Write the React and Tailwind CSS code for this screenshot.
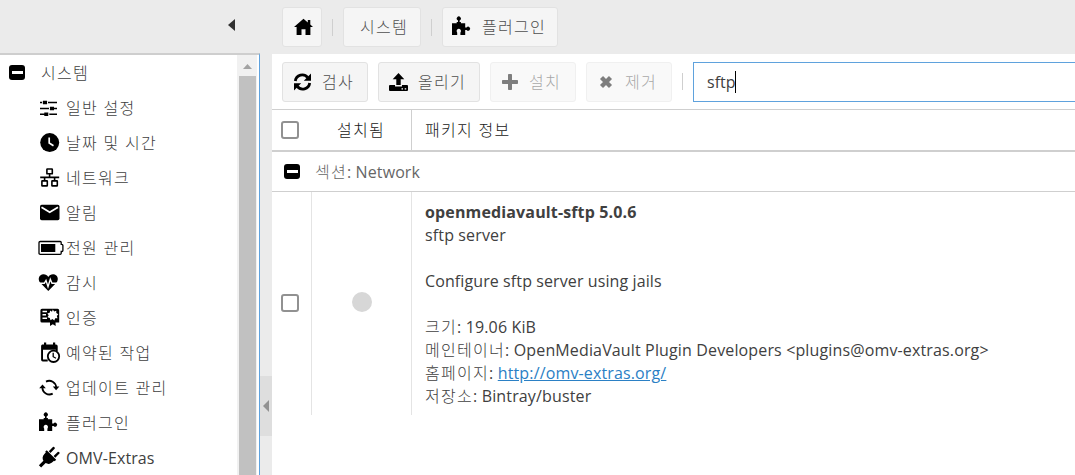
import React from "react";

const KR = "font-['Open_Sans','Noto_Sans_CJK_KR',sans-serif]";

function Icon({ children, className = "" }) {
  return (
    <svg viewBox="0 0 26 20" className={`h-5 w-[26px] shrink-0 overflow-visible ${className}`} fill="#000">
      {children}
    </svg>
  );
}

const puzzle = (
  <path
    d="M1 6.3H5.7V5.1H7V3.4A2 2 0 1 1 8.6 3.4V5.1H9.9V6.3H14.2V10.4H15.6A2 2 0 1 1 15.6 13H14.2V18H9.4V15.8L9.9 14.6A2.2 2.2 0 1 0 5.7 14.6L6.2 15.8V18H1Z"
  />
);

const heart = (
  <>
    <path d="M10.3 18 2 9.6C-.6 6 1.1 1.6 5.3 1.3 7.5 1.2 9.2 2.3 10.3 4 11.4 2.3 13.1 1.2 15.3 1.3 19.5 1.6 21.2 6 18.6 9.6Z" />
    <path d="M1 10.3H6.3L8 7.4 10 13.7 12.3 6.2 14 10.3H19.5" fill="none" stroke="#fff" strokeWidth="1.4" />
  </>
);

const icons = {
  tune: (
    <>
      <path d="M2 3.8H19V5.3H2ZM2 9.7H19V11.2H2ZM2 15.4H19V16.9H2Z" />
      <path d="M5 2.7H9V6.3H5ZM12 8.7H16V12.3H12ZM6.3 14.5H10.3V18H6.3Z" />
      <path d="M9 3.5h1v2H9zM4.2 3.5h.8v2h-.8zM11 9.5h1v2h-1zM10.3 15.2h1v2h-1z" fill="#fff" />
    </>
  ),
  clock: (
    <>
      <circle cx="11.7" cy="9.6" r="9.5" />
      <path d="M11.2 4.5V10L15.5 12.7" fill="none" stroke="#fff" strokeWidth="1.7" />
    </>
  ),
  lan: (
    <g fill="none" stroke="#000" strokeWidth="1.6">
      <rect x="8.9" y="1" width="5.4" height="4.8" rx=".4" />
      <path d="M2.2 9.4H21.2M11.6 6V9.4M6.6 9.4V12.7M16.6 9.4V12.7" />
      <rect x="3.9" y="12.9" width="5.4" height="5" rx=".4" />
      <rect x="13.9" y="12.9" width="5.4" height="5" rx=".4" />
    </g>
  ),
  mail: (
    <>
      <rect x="2" y="1.8" width="19.5" height="15.4" rx="1.7" />
      <path d="M3.5 4.2 11.7 9.2 20 4.2" fill="none" stroke="#fff" strokeWidth="1.8" />
    </>
  ),
  battery: (
    <>
      <path d="M2.3 3.5H22.2Q23.2 3.5 23.2 4.5V6.3H23.8Q24.9 6.3 24.9 7.4V12.4Q24.9 13.5 23.8 13.5H23.2V15.3Q23.2 16.3 22.2 16.3H2.3Q1 16.3 1 15.3V4.5Q1 3.5 2.3 3.5Z" fill="none" stroke="#000" strokeWidth="1.3" />
      <path d="M3 6H17.3V14H3Z" />
    </>
  ),
  heart,
  cert: (
    <>
      <path d="M4 .8H19.6Q21.2.8 21.2 2.4V14.5H17.5L17.7 18 14.8 16.2 12 18V14.5H4Q2.4 14.5 2.4 12.9V2.4Q2.4.8 4 .8Z" />
      <path d="M4.5 2.7H9V4.2H4.5ZM4.5 6H8V7.6H4.5ZM4.5 9.4H9V11H4.5Z" fill="#fff" />
      <path d="M14.8 1.6 16.1 3.5 18.3 2.7 18.3 5 20.3 6.2 18.8 8 19.5 10.2 17.2 10.2 16.3 12.4 14.5 11 12.5 12.2 11.8 10 9.5 9.3 10.7 7.3 9.4 5.4 11.7 4.8 12.2 2.6 14 3.7Z" fill="#fff" />
    </>
  ),
  calendar: (
    <>
      <path d="M4.3 1.5H6V-.5H8.2V1.5H15V-.5H17.2V1.5H18Q19.7 1.5 19.7 3.2V8.3H17.8V6.8H5V16.6H9.7V18.4H4.8Q3.1 18.4 3.1 16.7V3.2Q3.1 1.5 4.3 1.5Z" />
      <circle cx="15.5" cy="13.3" r="5.7" fill="#fff" stroke="#000" strokeWidth="1.8" />
      <path d="M15.2 9.7V13.7L18 15.2" fill="none" stroke="#000" strokeWidth="1.3" />
    </>
  ),
  sync: (
    <>
      <path d="M8 3.6A7 7 0 0 1 18.2 9.5M14.7 15.6A7 7 0 0 1 4.4 9.5" fill="none" stroke="#000" strokeWidth="1.8" />
      <path d="M14.8 8.5H21.4L18.1 12.3ZM1.2 10.3H7.8L4.5 6.4Z" />
    </>
  ),
  puzzle,
  plug: (
    <g transform="rotate(45 10.5 10)">
      <path d="M3.8 5.8H17.2V8H16.3V10C16.3 13.2 14.3 15 12.1 15.6V22H8.9V15.6C6.7 15 4.7 13.2 4.7 10V8H3.8Z" />
      <path d="M5.9-1.2Q7.1-2.6 8.3-1.2V5H5.9ZM12.7-1.2Q13.9-2.6 15.1-1.2V5H12.7Z" />
    </g>
  ),
};

const menu = [
  ["tune", "일반 설정"],
  ["clock", "날짜 및 시간"],
  ["lan", "네트워크"],
  ["mail", "알림"],
  ["battery", "전원 관리"],
  ["heart", "감시"],
  ["cert", "인증"],
  ["calendar", "예약된 작업"],
  ["sync", "업데이트 관리"],
  ["puzzle", "플러그인"],
  ["plug", "OMV-Extras"],
];

function Minus() {
  return (
    <span className="flex h-[15px] w-4 shrink-0 items-center justify-center rounded-[3px] bg-black">
      <span className="h-[3px] w-[11px] bg-white" />
    </span>
  );
}

function Separator() {
  return <div className="h-[17px] w-px shrink-0 bg-[#cfcfcf]" />;
}

function Button({ width, children, disabled }) {
  return (
    <div className={`flex h-10 shrink-0 items-center rounded-[3px] border border-[#e2e2e2] bg-[#f5f5f5] text-[#505050] ${width} ${disabled ? "opacity-50" : ""}`}>
      {children}
    </div>
  );
}

function Ko({ children, className = "" }) {
  return <span className={`tracking-[1.3px] font-light ${className}`}>{children}</span>;
}

function Checkbox() {
  return <span className="block h-[18px] w-[18px] rounded-[3px] border-2 border-[#919191] bg-white" />;
}

export default function App() {
  return (
    <div className={`flex h-[475px] w-[1075px] overflow-hidden bg-[#ebebeb] text-base whitespace-nowrap text-[#404040] ${KR}`}>
      <aside className="flex w-[260px] shrink-0 flex-col">
        <div className="flex h-[53px] shrink-0 items-center justify-end pr-[25px]">
          <svg className="mt-[-3px] h-3 w-[7px]" viewBox="0 0 7 12"><path d="M7 0V12L0 6Z" fill="#303030" /></svg>
        </div>
        <div className="flex flex-1 border-t-2 border-r border-t-[#cecece] border-r-[#5fa2dd] bg-white">
          <nav className="flex h-[420px] flex-1 flex-col">
            <div className="flex h-[35px] shrink-0 items-center pl-[9px]">
              <Minus />
              <Ko className="ml-4">시스템</Ko>
            </div>
            {menu.map(([icon, label]) => (
              <div key={label} className="flex h-[35px] shrink-0 items-center pl-[38px]">
                <Icon>{icons[icon]}</Icon>
                {icon === "plug" ? <span className="ml-0.5 tracking-[0.1px]">{label}</span> : <Ko className="ml-0.5">{label}</Ko>}
              </div>
            ))}
          </nav>
          <div className="flex h-[420px] w-5 flex-col bg-[#f1f1f1] pl-0.5">
            <svg className="h-[21px] w-[17px] shrink-0" viewBox="0 0 17 21"><path d="M4 14H13L8.5 9Z" fill="#a3a3a3" /></svg>
            <div className="w-[17px] flex-1 bg-[#c1c1c1]" />
          </div>
          <div className="w-0.5" />
        </div>
      </aside>
      <div className="flex w-3 shrink-0 flex-col">
        <div className="mt-[376px] flex h-[60px] items-center bg-[#dedede] pl-[3px]">
          <svg className="h-3 w-[6px]" viewBox="0 0 6 12"><path d="M6 0V12L0 6Z" fill="#929292" /></svg>
        </div>
      </div>
      <main className="flex min-w-0 flex-1 flex-col">
        <div className="flex h-[54px] shrink-0 items-center gap-[10px] pl-[10px]">
          <Button width="w-10">
            <svg className="ml-[11px] h-[18px] w-[19px]" viewBox="0 0 19 18"><path d="M9.5.8 13.8 4.4V2H16.3V6.5L19 9H16.4V17H11.5V11.3H7.5V17H2.6V9H0Z" fill="#000" /></svg>
          </Button>
          <Separator />
          <Button width="w-[78px] pl-4"><Ko>시스템</Ko></Button>
          <Separator />
          <Button width="w-[116px] pl-2"><Icon>{puzzle}</Icon><Ko className="ml-[5px]">플러그인</Ko></Button>
        </div>
        <div className="flex h-[421px] flex-col bg-white">
          <div className="flex h-[56px] shrink-0 items-center gap-[10px] border-b border-[#cfcfcf] pl-[10px]">
            <Button width="w-[86px]">
              <svg className="ml-[10px] h-[18px] w-[19px]" viewBox="0 0 19 18">
                <path d="M2.3 8A7 7 0 0 1 14.7 4.6M16.7 10A7 7 0 0 1 4.3 13.4" fill="none" stroke="#000" strokeWidth="2.8" />
                <path d="M18 .5V7.7H10.8ZM1 17.5V10.3H8.2Z" fill="#000" />
              </svg>
              <Ko className="ml-[10px]">검사</Ko>
            </Button>
            <Button width="w-[102px]">
              <svg className="ml-[10px] h-[18px] w-[19px]" viewBox="0 0 19 18">
                <path d="M9.5 0 15.3 6.2H11.7V12H7.3V6.2H3.7Z" fill="#000" />
                <path d="M1 12H6V13.5H13V12H18Q19 12 19 13V17Q19 18 18 18H1Q0 18 0 17V13Q0 12 1 12Z" fill="#000" />
                <path d="M12.5 15.3H14V16.5H12.5ZM15.7 15.3H17.2V16.5H15.7Z" fill="#fff" />
              </svg>
              <Ko className="ml-[10px]">올리기</Ko>
            </Button>
            <Button width="w-[86px]" disabled>
              <svg className="ml-[11px] h-4 w-4" viewBox="0 0 16 16"><path d="M6.8 0H9.2Q10 0 10 .8V6H15.2Q16 6 16 6.8V9.2Q16 10 15.2 10H10V15.2Q10 16 9.2 16H6.8Q6 16 6 15.2V10H.8Q0 10 0 9.2V6.8Q0 6 .8 6H6V.8Q6 0 6.8 0Z" fill="#000" /></svg>
              <Ko className="ml-[11px]">설치</Ko>
            </Button>
            <Button width="w-[86px]" disabled>
              <svg className="ml-[12px] h-[14px] w-[14px]" viewBox="0 0 14 14"><path d="M2.5 2.5 11.5 11.5M11.5 2.5 2.5 11.5" stroke="#000" strokeWidth="4.3" /></svg>
              <Ko className="ml-[12px]">제거</Ko>
            </Button>
            <Separator />
            <div className="flex h-10 flex-1 items-center border border-r-0 border-[#5fa2dd] pl-[13px]">
              <span>sftp</span>
              <span className="-ml-px h-[22px] w-px bg-black" />
            </div>
          </div>
          <div className="flex h-[42px] shrink-0 items-stretch border-b-2 border-[#cfcfcf] text-[#202020]">
            <div className="flex w-[39px] items-center pl-[9px]"><Checkbox /></div>
            <div className="flex w-[101px] items-center border-r border-[#cfcfcf] pl-[26px]"><Ko>설치됨</Ko></div>
            <div className="flex items-center pl-[13px]"><Ko>패키지 정보</Ko></div>
          </div>
          <div className="flex h-10 shrink-0 items-center border-b border-[#cfcfcf] pl-3 text-[#666]">
            <Minus />
            <span className="ml-[15px] tracking-[0.1px]"><Ko>섹션</Ko>: Network</span>
          </div>
          <div className="flex h-[223px] shrink-0">
            <div className="flex w-10 items-center border-r border-[#e4e4e4] pb-px pl-[9px]"><Checkbox /></div>
            <div className="flex w-[100px] items-center justify-center border-r border-[#e4e4e4] pb-[3px]">
              <span className="h-5 w-5 rounded-full bg-[#d7d7d7]" />
            </div>
            <div className="pt-[9px] pl-[13px] leading-[23px] tracking-[0.14px]">
              <div className="h-[23px] font-bold">openmediavault-sftp 5.0.6</div>
              <div className="h-[23px]">sftp server</div>
              <div className="mt-[23px] h-[23px] tracking-[0.1px]">Configure sftp server using jails</div>
              <div className="mt-[23px] h-[23px]"><Ko>크기</Ko>: 19.06 KiB</div>
              <div className="h-[23px]"><Ko>메인테이너</Ko>: OpenMediaVault Plugin Developers &lt;plugins@omv-extras.org&gt;</div>
              <div className="h-[23px]"><Ko>홈페이지</Ko>: <a className="text-[#2b80c5] underline">http://omv-extras.org/</a></div>
              <div className="h-[23px]"><Ko>저장소</Ko>: Bintray/buster</div>
            </div>
          </div>
        </div>
      </main>
    </div>
  );
}
